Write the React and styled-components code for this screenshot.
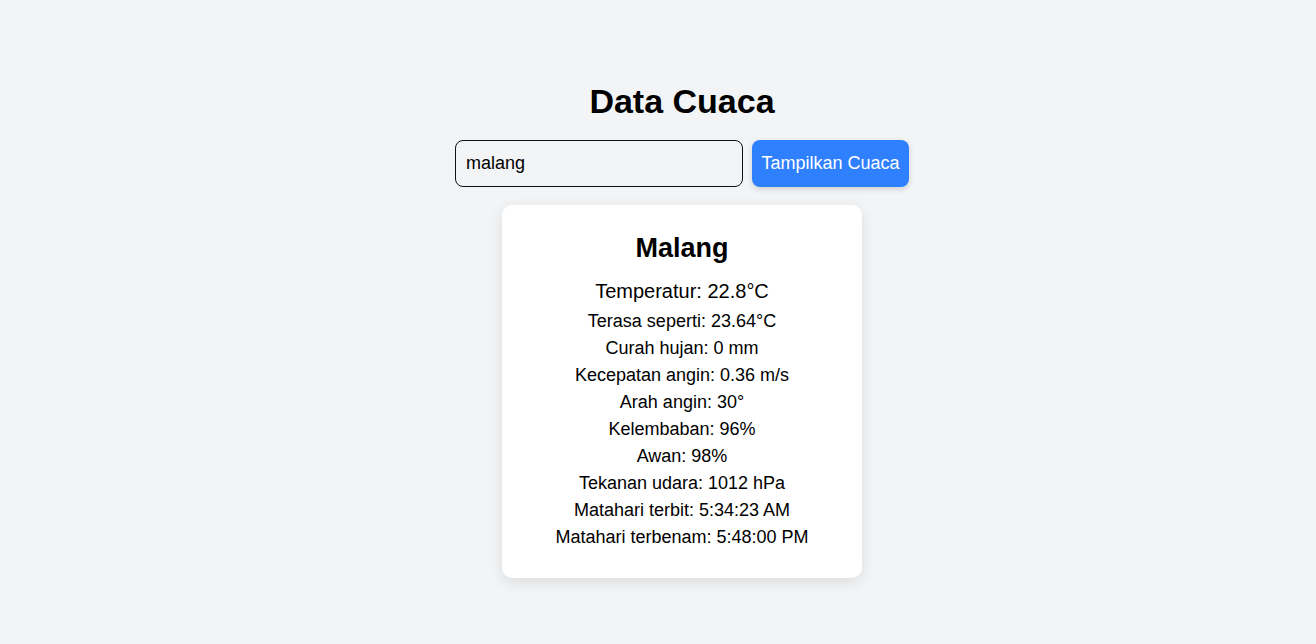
import React, { useState } from 'react';
import styled, { createGlobalStyle } from 'styled-components';

const GlobalStyle = createGlobalStyle`
    html, body {
        margin: 0;
        padding: 0;
        background: #f3f4f6;
        font-family: "Liberation Sans", Arial, sans-serif;
        color: #000;
    }
`;

const weather = {
    city: 'Malang',
    temp: 22.8,
    details: [
        'Terasa seperti: 23.64°C',
        'Curah hujan: 0 mm',
        'Kecepatan angin: 0.36 m/s',
        'Arah angin: 30°',
        'Kelembaban: 96%',
        'Awan: 98%',
        'Tekanan udara: 1012 hPa',
        'Matahari terbit: 5:34:23 AM',
        'Matahari terbenam: 5:48:00 PM',
    ],
};

function App() {
    const [query, setQuery] = useState('malang');

    return (
        <Page>
            <GlobalStyle />
            <Title>Data Cuaca</Title>
            <SearchRow>
                <SearchInput value={query} onChange={(e) => setQuery(e.target.value)} />
                <SearchButton>Tampilkan Cuaca</SearchButton>
            </SearchRow>
            <Card>
                <City>{weather.city}</City>
                <Temp>Temperatur: {weather.temp}°C</Temp>
                {weather.details.map((line) => (
                    <Detail key={line}>{line}</Detail>
                ))}
            </Card>
        </Page>
    );
}

const Page = styled.div`
    min-height: 644px;
    box-sizing: border-box;
    padding: 83px 0 0 48px;
    display: flex;
    flex-direction: column;
    align-items: center;
`;

const Title = styled.h1`
    font-size: 34px;
    line-height: 37px;
    font-weight: 700;
    margin: 0 0 20px;
`;

const SearchRow = styled.div`
    display: flex;
    gap: 9px;
    margin-bottom: 18px;
`;

const SearchInput = styled.input`
    width: 288px;
    height: 47px;
    box-sizing: border-box;
    padding: 0 10px;
    border: 1px solid #111;
    border-radius: 8px;
    background: transparent;
    font-family: inherit;
    font-size: 18px;
    color: #000;
    outline: none;
`;

const SearchButton = styled.button`
    width: 157px;
    height: 47px;
    border: none;
    border-radius: 8px;
    background: #2f80ff;
    color: #fff;
    font-family: inherit;
    font-size: 18px;
    padding: 0;
    white-space: nowrap;
    box-shadow: 0 2px 6px rgba(0, 0, 0, 0.15);
    cursor: pointer;
`;

const Card = styled.div`
    width: 360px;
    box-sizing: border-box;
    padding: 28px 20px 27px;
    background: #fff;
    border-radius: 10px;
    box-shadow: 0 4px 14px rgba(0, 0, 0, 0.1);
    text-align: center;
`;

const City = styled.h2`
    font-size: 27px;
    line-height: 30px;
    font-weight: 700;
    margin: 0 0 13px;
`;

const Temp = styled.p`
    font-size: 20px;
    line-height: 30px;
    margin: 0 0 2px;
`;

const Detail = styled.p`
    font-size: 18px;
    line-height: 27px;
    margin: 0;
`;

export default App;
